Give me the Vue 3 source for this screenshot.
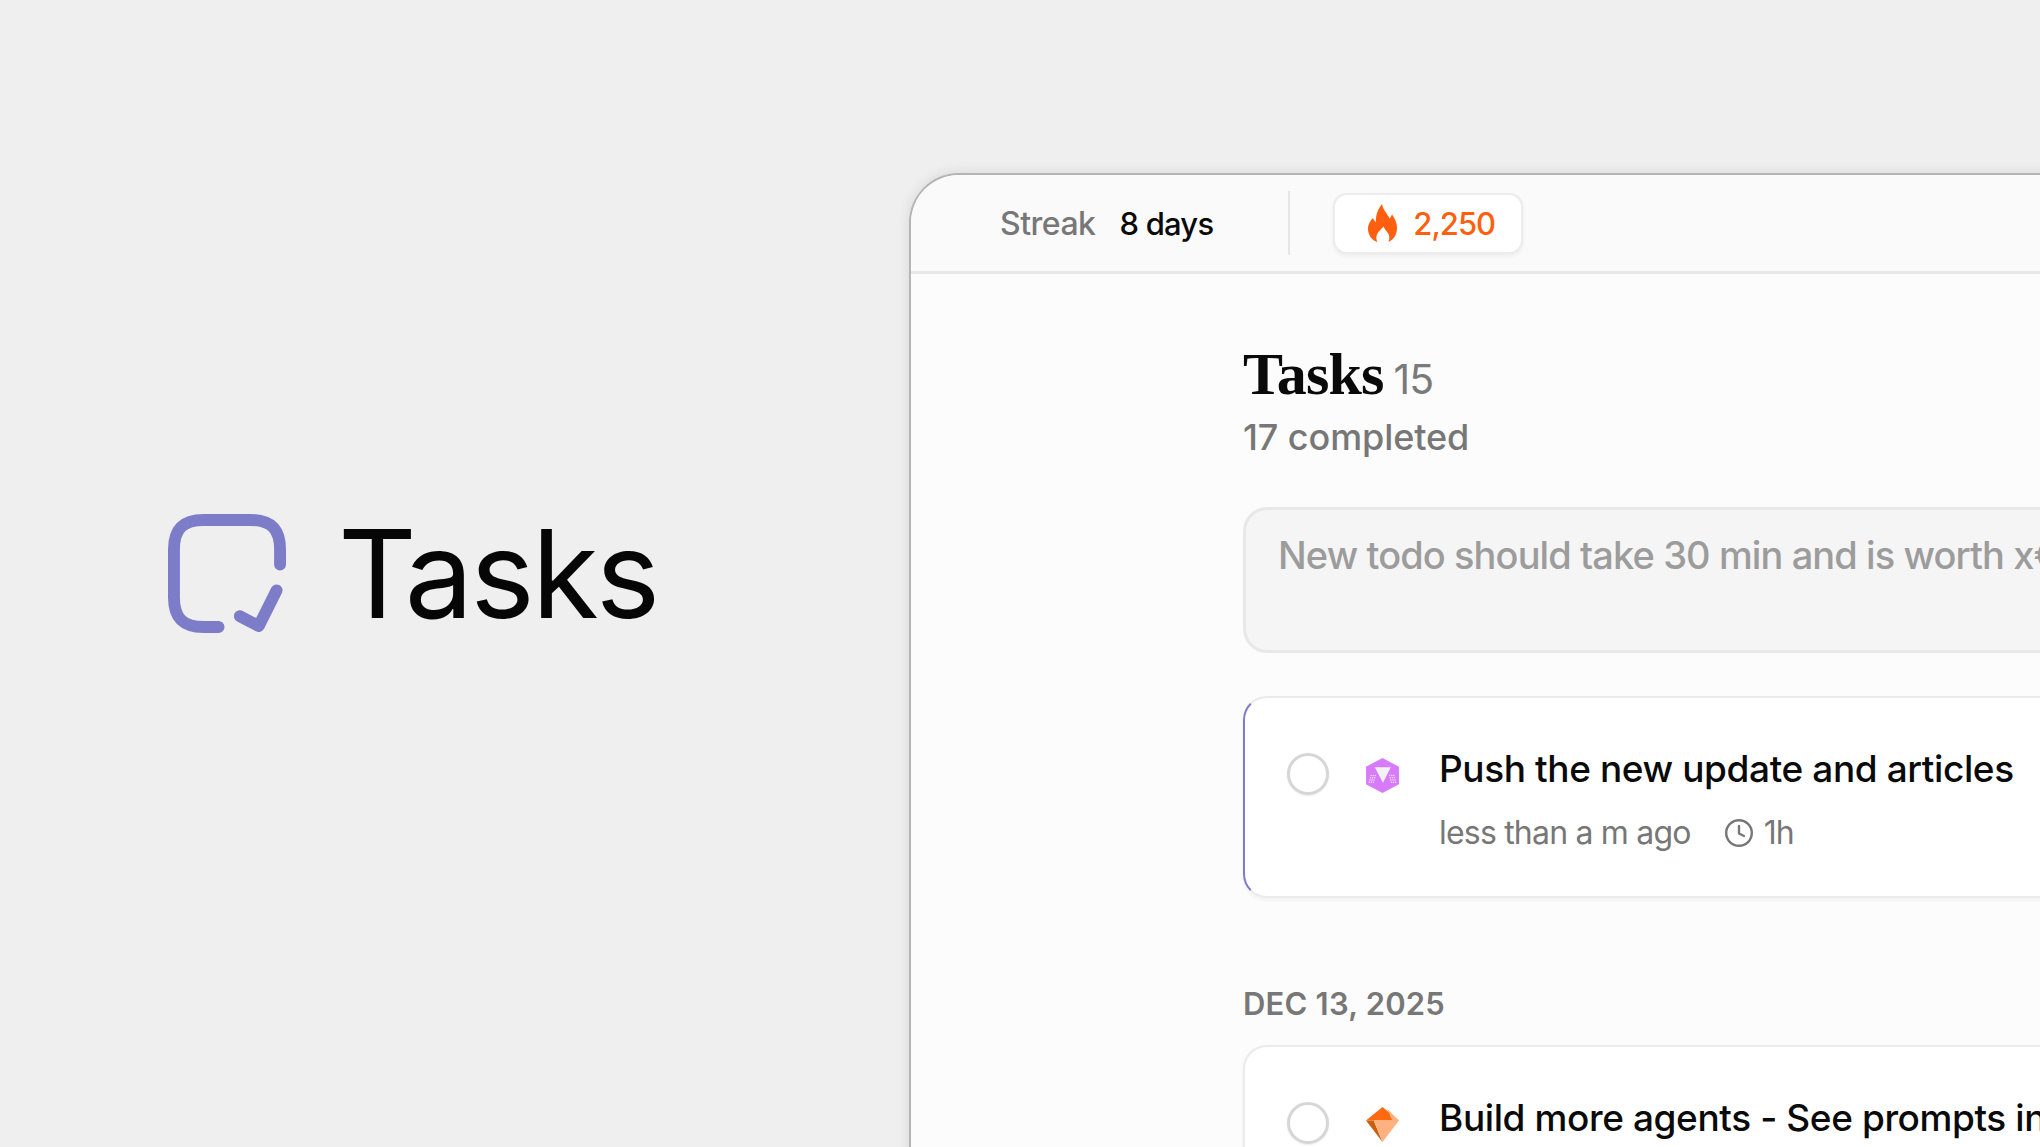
<template>
  <div class="page">
    <!-- Logo -->
    <section class="brand">
      <svg class="brand-icon" viewBox="0 0 120 120" fill="none" stroke="#7c7cc8" stroke-width="12" stroke-linecap="round" stroke-linejoin="round">
        <path d="M113 51V36C113 15 104 6 83 6H36C15 6 6 15 6 36V84C6 105 15 114 36 114H51" />
        <path d="M72.5 103L91.5 113L109.5 77" />
      </svg>
      <span class="brand-name">Tasks</span>
    </section>

    <!-- Fenêtre de l'app -->
    <section class="window">
      <header class="topbar">
        <span class="streak-label">Streak</span>
        <span class="streak-value">8 days</span>
        <span class="topbar-sep"></span>
        <div class="points">
          <svg class="flame" viewBox="0 0 29 38">
            <path fill="#ff5f0f" d="M14 0C15 6 19 9 21.5 14.5C22.5 13.5 23.5 12 24 10.5C27 14.5 29 19 29 24C29 31 25 36 20.5 38C22 34 21.5 31 19.5 28.5C18.5 27 16.5 25 15.5 22.5C13 25.5 9 28.5 8.5 32.5C8.2 34.5 8.5 36.5 9.5 38C4 36.5 0 31 0 25C0 19.5 3 16 5 14C5.5 15.5 6.5 17 8 18C7.5 11 10 5 14 0Z" />
          </svg>
          <span class="points-value">2,250</span>
        </div>
      </header>

      <main class="content">
        <div class="title-row">
          <h1 class="title">Tasks</h1>
          <span class="title-count">15</span>
        </div>
        <p class="subtitle">17 completed</p>

        <div class="new-todo">{{ placeholder }}</div>

        <article class="task task-active">
          <span class="check"></span>
          <svg class="badge" viewBox="0 0 32 34">
            <polygon fill="#d87bfb" points="16,0 32,8.5 32,25.5 16,34 0,25.5 0,8.5" />
            <polygon fill="#f2f2f2" points="8.5,9 24,9 16.5,24" />
            <g fill="#f2e6fa">
              <circle v-for="d in dots" :key="d[0] + '-' + d[1]" :cx="d[0]" :cy="d[1]" r="0.7" />
            </g>
          </svg>
          <div class="task-body">
            <div class="task-title">{{ tasks[0] }}</div>
            <div class="task-meta">
              <span>less than a m ago</span>
              <svg class="clock" viewBox="0 0 30 30" fill="none" stroke="#777" stroke-width="2.4" stroke-linecap="round" stroke-linejoin="round">
                <circle cx="15" cy="15" r="12.8" />
                <path d="M15 8V15.5L20 18" />
              </svg>
              <span class="duration">1h</span>
            </div>
          </div>
        </article>

        <h2 class="date">DEC 13, 2025</h2>

        <article class="task">
          <span class="check"></span>
          <svg class="badge" viewBox="0 0 34 36">
            <polygon fill="#ff6a10" points="17,0 34,14 0,14" />
            <polygon fill="#ffb27f" points="22,2 34,14 27,14" />
            <polygon fill="#c9600f" points="0,14 8,14 17,36" />
            <polygon fill="#ffb27f" points="8,14 34,14 17,36" />
          </svg>
          <div class="task-body">
            <div class="task-title">{{ tasks[1] }}</div>
          </div>
        </article>
      </main>
    </section>
  </div>
</template>

<script setup>
const placeholder = 'New todo should take 30 min and is worth x€ when done'

const tasks = [
  'Push the new update and articles',
  'Build more agents - See prompts inside the doc'
]

// Petits points autour du triangle du badge
const dots = []
for (let row = 0; row < 4; row++) {
  for (let col = 0; col < 3; col++) {
    dots.push([5 + col * 2 - row * 0.6, 17 + row * 2.2])
    dots.push([27 - col * 2 + row * 0.6, 17 + row * 2.2])
  }
}
</script>

<style>
body {
  background: #efefef;
  overflow: hidden;
}
</style>

<style scoped>
.page {
  display: flex;
  width: 2040px;
  height: 1147px;
  overflow: hidden;
  background: #efefef;
  font-family: Inter, "Liberation Sans", sans-serif;
}

/* Logo */
.brand {
  flex: none;
  width: 909px;
  height: 1147px;
  box-sizing: border-box;
  padding-left: 168px;
  display: flex;
  align-items: center;
}

.brand-icon {
  width: 119px;
  height: 119px;
  flex: none;
}

.brand-name {
  margin-left: 51px;
  font-size: 122px;
  line-height: 1;
  font-weight: 400;
  letter-spacing: -3px;
  color: #060606;
}

/* Fenêtre */
.window {
  flex: none;
  width: 1400px;
  height: 1200px;
  margin-top: 173px;
  box-sizing: border-box;
  background: #fcfcfc;
  border: 2px solid #b4b4b4;
  border-right: none;
  border-bottom: none;
  border-radius: 50px 0 0 0;
  box-shadow: 0 0 14px rgba(0, 0, 0, 0.1);
}

.topbar {
  height: 99px;
  box-sizing: border-box;
  padding-left: 89px;
  display: flex;
  align-items: center;
  background: #fafafa;
  border-bottom: 3px solid #e8e8e8;
  border-radius: 48px 0 0 0;
  font-size: 31px;
  font-weight: 500;
}

.streak-label {
  color: #777;
  font-size: 32px;
  letter-spacing: -0.5px;
}

.streak-value {
  margin-left: 24px;
  color: #0a0a0a;
  letter-spacing: -0.8px;
}

.topbar-sep {
  width: 2px;
  height: 64px;
  margin-left: 75px;
  background: #e6e6e6;
}

.points {
  display: flex;
  align-items: center;
  width: 190px;
  height: 61px;
  box-sizing: border-box;
  margin-left: 43px;
  padding-left: 33px;
  background: #fff;
  border: 2px solid #ececec;
  border-radius: 14px;
  box-shadow: 0 2px 4px rgba(0, 0, 0, 0.06);
}

.flame {
  width: 29px;
  height: 38px;
  flex: none;
}

.points-value {
  margin-left: 16px;
  color: #ff5f0f;
  letter-spacing: -1px;
}

/* Contenu */
.content {
  padding: 65px 0 0 332px;
}

.title-row {
  display: flex;
  align-items: baseline;
  gap: 10px;
}

.title {
  margin: 0;
  font-family: "Liberation Serif", serif;
  font-size: 60px;
  line-height: 70px;
  font-weight: 700;
  letter-spacing: -0.8px;
  color: #0a0a0a;
}

.title-count {
  font-size: 41px;
  font-weight: 400;
  letter-spacing: -1px;
  color: #7a7a7a;
}

.subtitle {
  margin: 5px 0 0;
  font-size: 36px;
  line-height: 46px;
  font-weight: 500;
  letter-spacing: -0.1px;
  color: #777;
}

.new-todo {
  height: 146px;
  box-sizing: border-box;
  margin-top: 47px;
  padding: 20px 32px;
  background: #f5f5f5;
  border: 3px solid #e8e8e8;
  border-right: none;
  border-radius: 24px 0 0 24px;
  font-size: 38px;
  line-height: 50px;
  font-weight: 450;
  letter-spacing: -0.9px;
  white-space: nowrap;
  color: #9c9c9c;
}

.task {
  display: flex;
  align-items: flex-start;
  box-sizing: border-box;
  height: 202px;
  margin-top: 43px;
  padding: 55px 0 0 42px;
  background: #fff;
  border: 2px solid #ebebeb;
  border-right: none;
  border-radius: 24px 0 0 24px;
  box-shadow: 0 2px 4px rgba(0, 0, 0, 0.05);
}

.task-active {
  border-left-color: #7c7cc8;
}

.check {
  flex: none;
  width: 42px;
  height: 42px;
  box-sizing: border-box;
  border: 3px solid #d6d6d6;
  border-radius: 50%;
  background: #fff;
  box-shadow: 0 1px 2px rgba(0, 0, 0, 0.08);
}

.badge {
  flex: none;
  width: 33px;
  height: 35px;
  margin: 5px 0 0 37px;
}

.task-body {
  margin: -9px 0 0 40px;
  white-space: nowrap;
}

.task-title {
  font-size: 37px;
  line-height: 50px;
  font-weight: 500;
  letter-spacing: -0.4px;
  color: #0a0a0a;
}

.task-meta {
  display: flex;
  align-items: center;
  margin-top: 17px;
  font-size: 32px;
  line-height: 44px;
  letter-spacing: -0.8px;
  color: #777;
}

.clock {
  width: 30px;
  height: 30px;
  margin-left: 33px;
}

.duration {
  margin-left: 10px;
}

.date {
  margin: 86px 0 0;
  font-size: 31px;
  line-height: 40px;
  font-weight: 600;
  letter-spacing: 0.2px;
  color: #777;
}

.date + .task {
  margin-top: 21px;
  border-left-color: #ebebeb;
}
</style>
